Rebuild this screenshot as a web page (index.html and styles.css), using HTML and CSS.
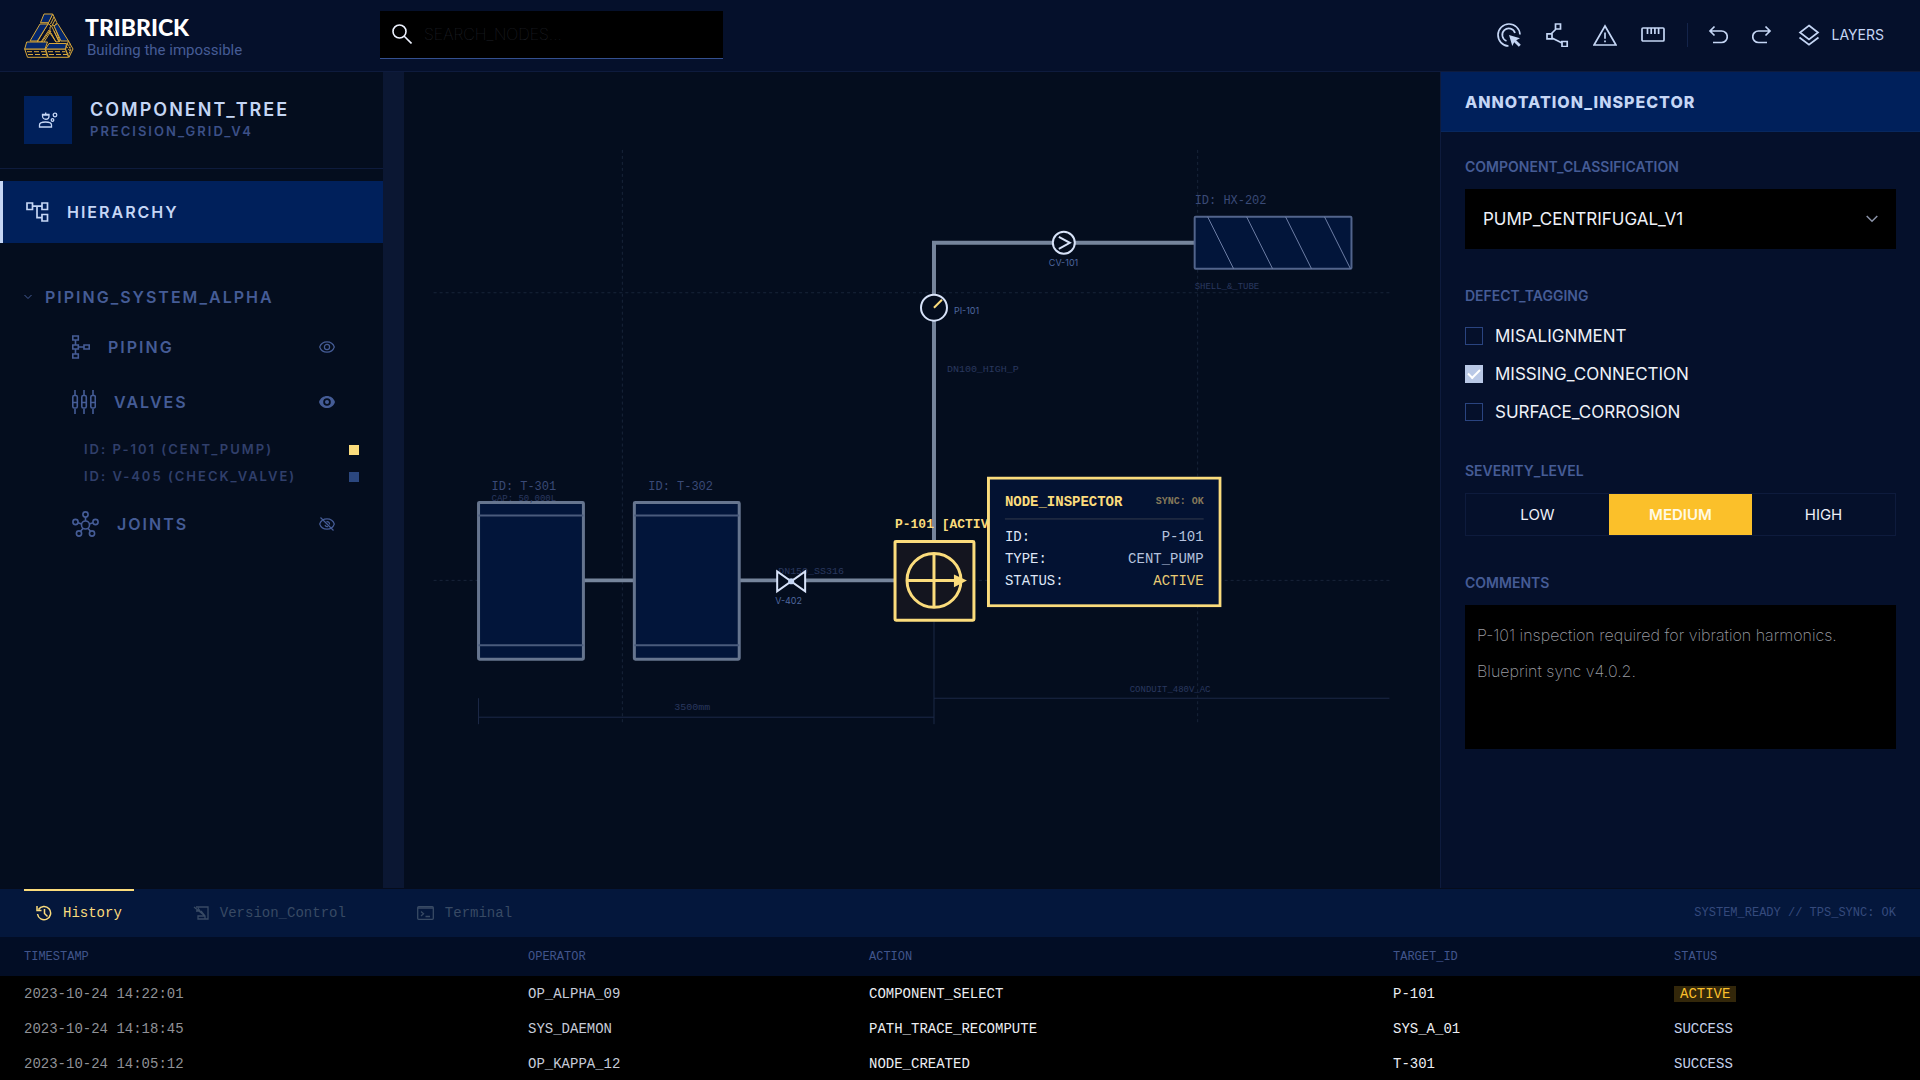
FILE: index.html
```html
<!DOCTYPE html>
<html lang="en">
<head>
<meta charset="utf-8">
<meta name="viewport" content="width=device-width, initial-scale=1">
<title>Tribrick – Component Inspector</title>
<link rel="stylesheet" href="styles.css">
</head>
<body>
<div class="app">
  <header class="topbar">
    <a class="brand" href="#">
      <svg class="brand-logo" viewBox="0 0 50 46" width="50" height="46" stroke="#d9a83a" stroke-width="1" stroke-linejoin="round" aria-hidden="true">
        <g fill="#050f2b">
          <path d="M28.700 1l4 8.500-3.700 7.500-5-7z"/>
          <path d="M24 10.500l4.500 3.500-10.500 15h-4.700z"/>
          <path d="M26 14l4-2 6 16.500-4 .500-6-9z"/>
          <path d="M.7 36h20.300l2.500 8.300H3.500z"/>
          <path d="M21.500 36h20l3 8.300H24.200z"/>
          <path d="M44.500 28l4.500 8-4 8.300-3.500-8.300z"/>
        </g>
        <g fill="#03266b">
          <path d="M20 1h8.700L24.500 9.700h-8z"/>
          <path d="M16 11h8L13.300 28H6z"/>
          <path d="M30 13l3.500-2.500 11 17.500H37z"/>
          <path d="M2.700 29h20.800L21 36H.7z"/>
          <path d="M25 30.500h17.500l-1 5.500h-20z"/>
        </g>
        <path fill="none" d="M25 17l-8 12M27 18l-7 11M28 14l7 14M30 18l5 11M27 20l5 9M30 4l-3.500 7M31.300 6.500l-3 5.500M10 11.500"/>
        <path fill="none" stroke-dasharray="5 2" d="M3 38.700h18M4 41.500h18M24 38.700h17.500M25 41.500h18"/>
        <path fill="none" stroke-dasharray="2 1" d="M43.500 31l3.500 6-2.500 4.500M42.500 33.500l3 4M46 30.500v10"/>
      </svg>
      <span class="brand-text">
        <span class="brand-name">TRIBRICK</span>
        <span class="brand-tag">Building the impossible</span>
      </span>
    </a>
    <label class="search">
      <svg viewBox="0 0 20 20" width="20" height="20" fill="none" stroke="#eef3ff" stroke-width="1.6" aria-hidden="true"><circle cx="7.500" cy="7.500" r="6.500"/><path d="M12 12l7.500 7.500"/></svg>
      <input type="search" placeholder="SEARCH_NODES..." aria-label="Search nodes">
    </label>
    <nav class="tools" aria-label="Tools">
      <button class="tool" type="button" aria-label="Select">
        <svg viewBox="0 0 24 24" width="24" height="24" fill="none" stroke="currentColor" stroke-width="1.700"><path d="M11.500 23A11 11 0 1 1 23 11.500"/><path d="M9.500 18A6.500 6.500 0 1 1 18 10"/><path fill="currentColor" stroke="none" d="M12 12l11 3.300-3.800 1.900 4.600 4.600-2 2-4.600-4.600-1.900 3.800z"/></svg>
      </button>
      <button class="tool" type="button" aria-label="Path">
        <svg viewBox="0 0 24 24" width="24" height="24" fill="none" stroke="currentColor" stroke-width="1.700"><path d="M10.500 1h5v5h-5zM2 10.800h5v5H2zM17 18.500h5.200v5H17zM11 6l-5 5M7 15l10 5"/></svg>
      </button>
      <button class="tool" type="button" aria-label="Warnings">
        <svg viewBox="0 0 24 24" width="24" height="24" fill="none" stroke="currentColor" stroke-width="1.700"><path d="M12 3L23 22H1z"/><path d="M12 9.500v6.200M12 17.500v1.800"/></svg>
      </button>
      <button class="tool" type="button" aria-label="Measure">
        <svg viewBox="0 0 24 24" width="24" height="24" fill="none" stroke="currentColor" stroke-width="1.700"><rect x="1" y="5" width="22" height="13" rx="1"/><path d="M6.500 5v6M10.200 5v6M13.900 5v6M17.600 5v6"/></svg>
      </button>
      <span class="tool-divider"></span>
      <button class="tool" type="button" aria-label="Undo">
        <svg viewBox="0 0 20 20" width="20" height="20" fill="none" stroke="currentColor" stroke-width="1.700"><path d="M6.500 1.500L2 6l4.500 4.500M2 6h11.500a5 5 0 0 1 0 11.500H5"/></svg>
      </button>
      <button class="tool" type="button" aria-label="Redo">
        <svg viewBox="0 0 20 20" width="20" height="20" fill="none" stroke="currentColor" stroke-width="1.700"><path d="M13.500 1.500L18 6l-4.500 4.500M18 6H6.500a5 5 0 0 0 0 11.500H15"/></svg>
      </button>
      <button class="tool tool-layers" type="button">
        <svg viewBox="0 0 22 22" width="22" height="22" fill="none" stroke="currentColor" stroke-width="1.700"><path d="M11 1.500l9 7-9 7-9-7zM1.500 13.500l9.500 7.200 9.500-7.200"/></svg>
        <span>LAYERS</span>
      </button>
    </nav>
  </header>

  <aside class="sidebar">
    <div class="tree-head">
      <span class="tree-badge">
        <svg viewBox="0 0 20 18" width="20" height="18" fill="none" stroke="#c5d6f5" stroke-width="1.300" aria-hidden="true"><path d="M1.500 16v-2c0-2 3-3 6-3s6 1 6 3v2zM4.500 3.500h6.500v1.500a3.200 3.200 0 0 1-6.500 0zM4 4.200h7.500M7.700 1.500v2"/><circle cx="17" cy="4" r="1.800"/><circle cx="14.500" cy="9" r="1.300"/></svg>
      </span>
      <div>
        <h2 class="tree-title">COMPONENT_TREE</h2>
        <p class="tree-sub">PRECISION_GRID_V4</p>
      </div>
    </div>
    <a class="tree-tab" href="#">
      <svg viewBox="0 0 23 20" width="23" height="20" fill="none" stroke="currentColor" stroke-width="1.700" aria-hidden="true"><path d="M1 1h5.500v6.500H1zM16 1h5.500v6.500H16zM16 12.500h5.500V19H16zM6.500 4.200H16M11 4.200v11.500h5"/></svg>
      HIERARCHY
    </a>
    <div class="tree">
      <button class="tree-group" type="button">
        <svg viewBox="0 0 8 6" width="8" height="6" fill="none" stroke="currentColor" aria-hidden="true"><path d="M.5 1L4 4.500 7.500 1"/></svg>
        PIPING_SYSTEM_ALPHA
      </button>
      <div class="tree-row">
        <svg viewBox="0 0 18 24" width="18" height="24" fill="none" stroke="currentColor" stroke-width="1.600"  aria-hidden="true"><path d="M.8 1h5.500v4H.8zM.8 10h5.500v4H.8zM.8 19h5.500v4H.8zM12 10h5.200v4H12zM3.500 5v5M3.500 14v5M6.300 12H12"/></svg>
        <span>PIPING</span>
        <button class="eye" type="button" aria-label="Toggle piping"><svg viewBox="0 0 16 12" width="16" height="12" fill="none" stroke="currentColor" stroke-width="1.200"><path d="M.7 6C3-.8 13-.8 15.300 6 13 12.800 3 12.800.7 6z"/><circle cx="8" cy="6" r="2.600"/></svg></button>
      </div>
      <div class="tree-row">
        <svg viewBox="0 0 24 24" width="24" height="24" fill="none" stroke="currentColor" stroke-width="1.600" aria-hidden="true"><path d="M3 0v5M3 19v5M12 0v5M12 19v5M21 0v5M21 19v5M.8 12.500h4.400M9.800 12.500h4.400M18.800 12.500h4.400"/><rect x=".8" y="5.500" width="4.500" height="12.500" rx="1.500"/><rect x="9.800" y="5.500" width="4.500" height="12.500" rx="1.500"/><rect x="18.800" y="5.500" width="4.500" height="12.500" rx="1.500"/></svg>
        <span>VALVES</span>
        <button class="eye" type="button" aria-label="Toggle valves"><svg viewBox="0 0 16 12" width="16" height="12" fill="currentColor"><path fill-rule="evenodd" d="M0 6C2.500-2 13.500-2 16 6 13.500 14 2.500 14 0 6zM8 2.200a3.800 3.800 0 1 0 0 7.600 3.800 3.800 0 0 0 0-7.600z"/><circle cx="8" cy="6" r="2"/></svg></button>
      </div>
      <ul class="tree-ids">
        <li>ID: P-101 (CENT_PUMP)<i class="mark mark-active"></i></li>
        <li>ID: V-405 (CHECK_VALVE)<i class="mark"></i></li>
      </ul>
      <div class="tree-row">
        <svg viewBox="0 0 27 26" width="27" height="26" fill="none" stroke="currentColor" stroke-width="1.600" aria-hidden="true"><circle cx="13.500" cy="14" r="4"/><circle cx="13.500" cy="3.500" r="2.600"/><circle cx="3.500" cy="11" r="2.600"/><circle cx="23.500" cy="11" r="2.600"/><circle cx="7" cy="22.500" r="2.600"/><circle cx="20" cy="22.500" r="2.600"/><path d="M13.500 6v4M6 11.700l3.700 1.200M21 11.700l-3.700 1.200M8.500 20.300l2.600-3M18.500 20.300l-2.600-3"/></svg>
        <span>JOINTS</span>
        <button class="eye" type="button" aria-label="Toggle joints"><svg viewBox="0 0 16 14" width="16" height="14" fill="none" stroke="currentColor" stroke-width="1.200"><path d="M.7 7C3 .2 13 .2 15.300 7 13 13.800 3 13.800.7 7zM1.500.5l13 13"/><path d="M6 8a2.500 2.500 0 0 0 3 1.500M7.500 4.600A2.500 2.500 0 0 1 10.500 7.500"/></svg></button>
      </div>
    </div>
  </aside>

  <main class="canvas">
    <svg class="diagram" viewBox="404 71 1036 817" role="img" aria-label="Piping diagram">
      <g class="guide">
        <path d="M622 149V724M1198 149V724M433 292H1390M433 580H1390"/>
      </g>
      <g class="pipe">
        <path d="M583 580H634M739 580H895M934 541V242H1195"/>
      </g>
      <g class="dimension">
        <path d="M478 698V724M478 717H934M934 621V724M934 698H1390"/>
      </g>
      <g class="vessel">
        <rect x="478" y="502" width="105" height="157" rx="1"/>
        <rect x="634" y="502" width="105" height="157" rx="1"/>
        <path class="seam" d="M478 515H583M478 645H583M634 515H739M634 645H739"/>
      </g>
      <g class="exchanger">
        <rect x="1195" y="216" width="157" height="52" rx="1"/>
        <path d="M1208 216l26 52M1247 216l26 52M1286 216l26 52M1325 216l26 52"/>
      </g>
      <text class="mono t12" x="491" y="490">ID: T-301</text>
      <text class="mono t9 faint" x="491" y="501">CAP: 50,000L</text>
      <text class="mono t12" x="648" y="490">ID: T-302</text>
      <text class="mono t12" x="1195" y="203">ID: HX-202</text>
      <text class="mono t9 faint" x="1195" y="288">SHELL_&amp;_TUBE</text>
      <text class="mono t10 faint" x="778" y="574">DN150_SS316</text>
      <text class="mono t10 faint" x="947" y="371">DN100_HIGH_P</text>
      <text class="mono t10 faint" x="674" y="710">3500mm</text>
      <text class="mono t9 faint" x="1130" y="692">CONDUIT_480V_AC</text>
      <g class="device">
        <path d="M777 571V591L805 571V591z"/>
        <circle class="device-core" cx="791" cy="581" r="3"/>
        <circle cx="934" cy="307" r="13"/>
        <circle cx="1064" cy="242" r="11"/>
        <path d="M1059 236l11 6-11 6"/>
      </g>
      <path class="needle" d="M934 307l8-8"/>
      <text class="tag" x="775" y="604">V-402</text>
      <text class="tag" x="954" y="313">PI-101</text>
      <text class="tag" x="1049" y="265">CV-101</text>
      <g class="pump">
        <rect x="895" y="541" width="79" height="79" rx="1"/>
        <circle cx="934" cy="580" r="27"/>
        <path d="M908 580H960M934 554V606"/>
        <path class="pump-arrow" d="M954 574L967 580 954 587z"/>
        <text class="pump-label" x="895" y="528">P-101 [ACTIVE]</text>
      </g>
      <foreignObject x="987" y="476" width="235" height="131">
        <div class="node-card">
          <div class="node-head"><strong>NODE_INSPECTOR</strong><span>SYNC: OK</span></div>
          <dl class="node-data">
            <div><dt>ID:</dt><dd>P-101</dd></div>
            <div><dt>TYPE:</dt><dd>CENT_PUMP</dd></div>
            <div><dt>STATUS:</dt><dd class="is-active">ACTIVE</dd></div>
          </dl>
        </div>
      </foreignObject>
    </svg>
  </main>

  <aside class="inspector">
    <h2 class="inspector-title">ANNOTATION_INSPECTOR</h2>
    <form class="inspector-form">
      <div class="field">
        <label class="field-label" for="classification">COMPONENT_CLASSIFICATION</label>
        <div class="select">
          <select id="classification"><option>PUMP_CENTRIFUGAL_V1</option></select>
          <svg viewBox="0 0 12 8" width="12" height="8" fill="none" stroke="#8b93a8" stroke-width="1.500" aria-hidden="true"><path d="M.7 1L6 6.300 11.300 1"/></svg>
        </div>
      </div>
      <fieldset class="field">
        <legend class="field-label">DEFECT_TAGGING</legend>
        <div class="checks">
          <label><input type="checkbox">MISALIGNMENT</label>
          <label><input type="checkbox" checked>MISSING_CONNECTION</label>
          <label><input type="checkbox">SURFACE_CORROSION</label>
        </div>
      </fieldset>
      <div class="field">
        <span class="field-label" id="severity">SEVERITY_LEVEL</span>
        <div class="segments" role="group" aria-labelledby="severity">
          <button type="button">LOW</button>
          <button type="button" class="is-on" aria-pressed="true">MEDIUM</button>
          <button type="button">HIGH</button>
        </div>
      </div>
      <div class="field">
        <label class="field-label" for="comments">COMMENTS</label>
        <textarea id="comments" spellcheck="false">P-101 inspection required for vibration harmonics.
Blueprint sync v4.0.2.</textarea>
      </div>
    </form>
  </aside>

  <section class="console">
    <div class="console-bar">
      <button class="console-tab is-current" type="button">
        <svg viewBox="0 0 16 16" width="16" height="16" fill="none" stroke="currentColor" stroke-width="1.500" aria-hidden="true"><path d="M2.500 4.500A6.600 6.600 0 1 1 1.500 9M1 1v4.500h4.500M8.500 4v4.500l3 3"/></svg>
        History
      </button>
      <button class="console-tab" type="button">
        <svg viewBox="0 0 16 14" width="16" height="14" fill="none" stroke="currentColor" stroke-width="1.300" aria-hidden="true"><path d="M3 1h12v12H5v-3h7M1 1l11 9M3 5h4l-2-3M8 5l4 5v3"/></svg>
        Version_Control
      </button>
      <button class="console-tab" type="button">
        <svg viewBox="0 0 17 14" width="17" height="14" fill="none" stroke="currentColor" stroke-width="1.300" aria-hidden="true"><rect x=".7" y=".7" width="15.600" height="12.600" rx="1"/><path d="M1 2h15M4 5.500l2.500 2.300L4 10M8.500 10.500H13"/></svg>
        Terminal
      </button>
      <span class="console-status">SYSTEM_READY // TPS_SYNC: OK</span>
    </div>
    <table class="log">
      <colgroup><col class="c-time"><col class="c-op"><col class="c-action"><col class="c-target"><col></colgroup>
      <thead><tr><th>TIMESTAMP</th><th>OPERATOR</th><th>ACTION</th><th>TARGET_ID</th><th>STATUS</th></tr></thead>
      <tbody>
        <tr><td>2023-10-24 14:22:01</td><td>OP_ALPHA_09</td><td>COMPONENT_SELECT</td><td>P-101</td><td><mark>ACTIVE</mark></td></tr>
        <tr><td>2023-10-24 14:18:45</td><td>SYS_DAEMON</td><td>PATH_TRACE_RECOMPUTE</td><td>SYS_A_01</td><td>SUCCESS</td></tr>
        <tr><td>2023-10-24 14:05:12</td><td>OP_KAPPA_12</td><td>NODE_CREATED</td><td>T-301</td><td>SUCCESS</td></tr>
      </tbody>
    </table>
  </section>
</div>
</body>
</html>
```
FILE: styles.css
```css
:root {
  --ink: #040d1e;
  --panel: #05102b;
  --royal: #00205b;
  --line: #0e1b3d;
  --pale: #c5d6f5;
  --dim: #455c96;
  --faint: #303f6b;
  --gold: #fbdc7c;
  --mono: "Liberation Mono", monospace;
}

* { box-sizing: border-box; }

body {
  margin: 0;
  background: var(--ink);
  color: var(--pale);
  font: 16px/24px Inter, sans-serif;
}

h2, p, ul, dl, dd { margin: 0; padding: 0; }
svg { display: block; flex: none; }
a { color: inherit; text-decoration: none; }
button {
  padding: 0;
  border: 0;
  background: none;
  color: inherit;
  font: inherit;
  letter-spacing: inherit;
  cursor: pointer;
}

.app {
  display: grid;
  grid-template: auto minmax(0, 1fr) 192px / 404px minmax(0, 1fr) 480px;
  grid-template-areas: "top top top" "side canvas inspect" "console console console";
  height: 100vh;
  overflow: hidden;
}

/* Top bar */
.topbar {
  grid-area: top;
  display: flex;
  align-items: center;
  height: 72px;
  padding: 0 36px 2px 24px;
  background: var(--panel);
  border-bottom: 1px solid var(--line);
}
.brand { display: flex; align-items: center; gap: 11px; width: 356px; padding-top: 2px; }
.brand-text { display: flex; flex-direction: column; padding-top: 2px; }
.brand-name { color: #fff; font: 900 23px/26px Lato, sans-serif; }
.brand-tag { padding-left: 2px; color: var(--dim); font: 15px/20px Roboto, sans-serif; }
.search {
  display: flex;
  align-items: center;
  gap: 12px;
  width: 343px;
  height: 48px;
  padding-left: 12px;
  background: #000;
  border-bottom: 1px solid #34508f;
}
.search input {
  flex: 1;
  min-width: 0;
  padding: 0;
  border: 0;
  outline: 0;
  background: none;
  color: var(--pale);
  font: 100 16px/24px Inter, sans-serif;
}
.search input::placeholder { color: #2b2e38; opacity: 1; }
.tools { display: flex; align-items: center; gap: 24px; margin-left: auto; color: var(--pale); }
.tool { display: flex; align-items: center; gap: 12px; font-size: 14px; }
.tool-divider { width: 1px; height: 24px; margin: 0 -4px 0 -2px; background: #14244a; }
.tool-layers { margin-left: 2px; }

/* Component tree */
.sidebar {
  grid-area: side;
  border-right: 21px solid #0b1733;
  background: var(--ink);
  font-weight: 600;
  letter-spacing: 2px;
  overflow: hidden;
}
.tree-head {
  display: flex;
  align-items: center;
  gap: 18px;
  height: 97px;
  padding: 0 24px;
  border-bottom: 1px solid var(--line);
}
.tree-badge { display: grid; place-items: center; width: 48px; height: 48px; background: var(--royal); }
.tree-title { font-size: 18px; line-height: 22px; font-weight: 600; }
.tree-sub { color: #3c5087; font-size: 13px; line-height: 20px; }
.tree-tab {
  display: flex;
  align-items: center;
  gap: 18px;
  height: 62px;
  margin-top: 12px;
  padding-left: 23px;
  border-left: 3px solid var(--pale);
  background: var(--royal);
}
.tree { padding: 36px 24px 0; color: var(--dim); }
.tree-group { display: flex; align-items: center; gap: 13px; height: 36px; font-weight: 600; }
.tree-row {
  display: flex;
  align-items: center;
  gap: 18px;
  height: 55px;
  padding: 0 24px 0 48px;
}
.tree-group + .tree-row { margin-top: 4px; }
.eye { margin-left: auto; }
.tree-ids { padding: 7px 0 6px 60px; list-style: none; color: var(--faint); font-size: 13px; line-height: 27px; }
.tree-ids li { display: flex; align-items: center; justify-content: space-between; }
.mark { width: 10px; height: 10px; background: #2b477f; }
.mark-active { background: var(--gold); }

/* Diagram canvas */
.canvas { grid-area: canvas; background: var(--ink); overflow: hidden; }
.diagram { width: 100%; height: 100%; }
.diagram path, .diagram rect, .diagram circle { fill: none; }
.guide { stroke: #182439; stroke-width: 1; stroke-dasharray: 3 3; }
.pipe { stroke: #76859c; stroke-width: 4; }
.dimension { stroke: #1c2947; stroke-width: 1; }
.vessel { stroke: #66758f; stroke-width: 3; }
.vessel .seam { stroke-width: 2; stroke: #4a5b7c; }
.exchanger { stroke: #52648c; stroke-width: 2; }
.exchanger path { stroke-width: 1; stroke: #6d7ea6; }
.diagram .vessel rect, .diagram .exchanger rect { fill: #02153a; }
.device { stroke: #d7e2f8; stroke-width: 2; }
.diagram .device path, .diagram .device circle { fill: var(--ink); }
.diagram .device .device-core { fill: var(--pale); stroke: none; }
.needle { stroke: var(--gold); stroke-width: 2; }
.mono { fill: #3a4a77; font-family: var(--mono); }
.faint { fill: #2a385e; }
.t12 { font-size: 12px; }
.t10 { font-size: 10px; }
.t9 { font-size: 9px; }
.tag { fill: #4f679f; font-size: 9px; }
.pump { stroke: var(--gold); stroke-width: 3; }
.diagram .pump rect { fill: #14151f; }
.diagram .pump .pump-arrow { fill: var(--gold); stroke: none; }
.pump-label { fill: var(--gold); stroke: none; font: bold 13px var(--mono); }
.node-card {
  height: 100%;
  padding: 13px 15px;
  border: 3px solid var(--gold);
  background: #031232;
  font: 14px/22px var(--mono);
}
.node-head {
  display: flex;
  align-items: center;
  justify-content: space-between;
  height: 27px;
  padding-bottom: 6px;
  border-bottom: 1px solid #343b4b;
  color: var(--gold);
}
.node-head span { color: #86795a; font-size: 10px; font-weight: bold; }
.node-data { margin-top: 7px; }
.node-data div { display: flex; justify-content: space-between; }
.node-data dt { color: #dfe6f6; }
.node-data dd { color: #b5c2de; }
.node-data .is-active { color: #e9cb74; }

/* Annotation inspector */
.inspector { grid-area: inspect; border-left: 1px solid var(--line); background: var(--panel); overflow: hidden; }
.inspector-title {
  height: 60px;
  padding-left: 24px;
  border-bottom: 1px solid #08285f;
  background: var(--royal);
  font-size: 16px;
  line-height: 60px;
  font-weight: 800;
  letter-spacing: 1px;
}
.inspector-form { display: flex; flex-direction: column; gap: 36px; padding: 24px; }
.field { min-width: 0; margin: 0; padding: 0; border: 0; }
.field-label {
  display: block;
  padding: 0;
  margin-bottom: 11px;
  color: var(--dim);
  font-size: 14px;
  line-height: 22px;
  font-weight: 600;
}
.select { display: grid; align-items: center; background: #000; }
.select select, .select svg { grid-area: 1 / 1; }
.select svg { justify-self: end; margin-right: 18px; pointer-events: none; }
.select select {
  width: 100%;
  height: 60px;
  padding: 0 18px;
  border: 0;
  appearance: none;
  background: none;
  color: #eef1f8;
  font: 17px/24px Inter, sans-serif;
}
.checks { display: flex; flex-direction: column; gap: 14px; padding-top: 6px; color: #eef1f8; font-size: 17px; }
.checks label { display: flex; align-items: center; gap: 12px; }
.checks input {
  display: grid;
  place-items: center;
  width: 18px;
  height: 18px;
  margin: 0;
  border: 1px solid #2a4480;
  appearance: none;
}
.checks input:checked { border-color: #b9c8e6; background: #b9c8e6; }
.checks input:checked::after {
  content: "";
  width: 10px;
  height: 5px;
  margin-bottom: 3px;
  border: solid #fff;
  border-width: 0 0 2px 2px;
  transform: rotate(-45deg);
}
.segments { display: grid; grid-template-columns: repeat(3, 1fr); border: 1px solid var(--line); color: #eef1f8; font-size: 15px; }
.segments button { height: 41px; }
.segments .is-on { background: #fbc02a; color: #fffae6; font-weight: 600; }
textarea {
  display: block;
  width: 100%;
  height: 144px;
  padding: 12px;
  border: 0;
  outline: 0;
  resize: none;
  background: #000;
  color: #9a9ca2;
  font: 200 16px/36px Inter, sans-serif;
}

/* Console */
.console { grid-area: console; overflow: hidden; border-top: 1px solid #060c1c; background: #000; font: 14px/20px var(--mono); }
.console-bar { display: flex; height: 48px; padding: 0 24px; background: #04173c; }
.console-tab {
  display: flex;
  align-items: center;
  gap: 11px;
  padding: 0 12px 2px 12px;
  margin-right: 47px;
  border-top: 2px solid transparent;
  color: #384a64;
}
.console-tab.is-current { border-color: var(--gold); color: var(--gold); }
.console-status { margin-left: auto; align-self: center; color: #354a7c; font-size: 12px; }
.log { width: 100%; border-collapse: collapse; table-layout: fixed; text-align: left; }
.log th { height: 39px; padding: 0; background: #020d25; color: #41558c; font-size: 12px; font-weight: 400; }
.log td { height: 35px; padding: 0; color: #eceef3; }
.log th:first-child, .log td:first-child { padding-left: 24px; }
.log td:first-child { color: #8f9196; }
.log td:nth-child(2) { color: #c6cbd8; }
.log td:last-child { color: #c3d0ea; }
.c-time { width: 528px; }
.c-op { width: 341px; }
.c-action { width: 524px; }
.c-target { width: 281px; }
.log mark { padding: 0 6px; background: #33270a; color: #fbc02a; }
```
